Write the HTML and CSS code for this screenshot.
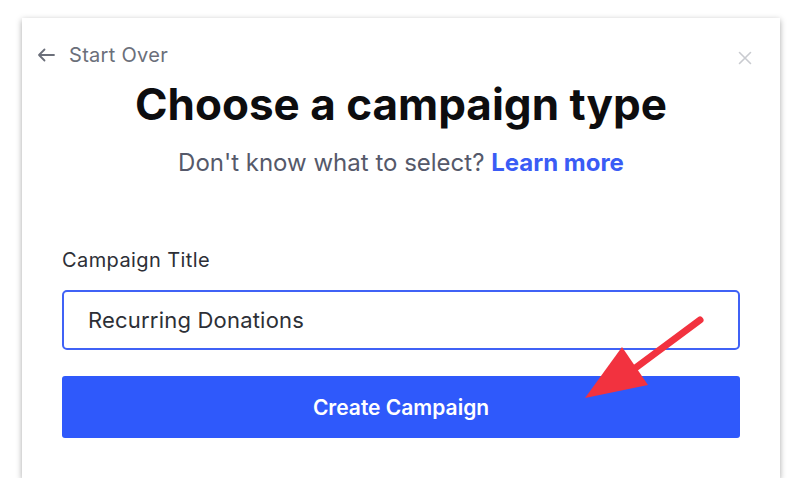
FILE: index.html
```html
<!DOCTYPE html>
<html lang="en">
<head>
    <meta charset="UTF-8">
    <meta name="viewport" content="width=device-width, initial-scale=1.0">
    <title>Choose a campaign type</title>
    <link rel="stylesheet" href="styles.css">
</head>
<body>
    <div class="modal">
        <div class="topbar">
            <a class="back" href="#">
                <svg width="18" height="14" viewBox="0 0 18 14"><path d="M17 7H2M7.5 1.5L2 7l5.5 5.5" fill="none" stroke="#6b6f7a" stroke-width="1.8" stroke-linecap="round" stroke-linejoin="round"/></svg>
                <span>Start Over</span>
            </a>
            <button class="close" type="button" aria-label="Close">
                <svg width="14" height="14" viewBox="0 0 14 14"><path d="M1.5 1.5l11 11M12.5 1.5l-11 11" stroke="#c9cbd0" stroke-width="1.6" stroke-linecap="round"/></svg>
            </button>
        </div>

        <h1>Choose a campaign type</h1>
        <p class="sub">Don't know what to select? <a href="#">Learn more</a></p>

        <form class="form">
            <label for="title">Campaign Title</label>
            <input type="text" id="title" value="Recurring Donations">
            <button type="button" class="create">Create Campaign</button>
        </form>

        <svg class="pointer" width="140" height="100" viewBox="0 0 140 100">
            <path d="M121 8L55 57" stroke="#f2323f" stroke-width="7" stroke-linecap="round"/>
            <polygon points="6,86 43,35 69,73" fill="#f2323f"/>
        </svg>
    </div>
</body>
</html>
```

FILE: styles.css
```css
body {
    margin: 0;
    padding: 18px 0 0 22px;
    background: #fff;
    font-family: Inter, "Noto Sans", sans-serif;
}
.modal {
    position: relative;
    width: 758px;
    height: 460px;
    box-sizing: border-box;
    background: #fff;
    box-shadow: 0 2px 6px rgba(0,0,0,0.35);
    padding: 25px 40px 0 40px;
}
.topbar {
    display: flex;
    justify-content: space-between;
    align-items: center;
    height: 24px;
    margin: 0 -12px 0 -25px;
}
.back {
    display: flex;
    align-items: center;
    gap: 14px;
    color: #6b6f7a;
    text-decoration: none;
    font-size: 20px;
    line-height: 24px;
    letter-spacing: 0.3px;
}
.close {
    background: none;
    border: none;
    padding: 0;
    margin-top: 6px;
    display: flex;
}
h1 {
    margin: 11px 0 0;
    text-align: center;
    font-size: 44px;
    line-height: 52px;
    font-weight: 700;
    color: #0d0d0f;
}
.sub {
    margin: 18px 0 0;
    text-align: center;
    font-size: 24px;
    line-height: 30px;
    color: #55596a;
}
.sub a {
    color: #3a5cf5;
    font-weight: 700;
    text-decoration: none;
}
.form {
    margin-top: 70px;
}
label {
    display: block;
    font-size: 20px;
    line-height: 24px;
    letter-spacing: 0.4px;
    color: #2d2f36;
    margin-bottom: 18px;
}
input {
    display: block;
    width: 100%;
    height: 60px;
    box-sizing: border-box;
    border: 2px solid #4062f6;
    border-radius: 5px;
    padding: 0 24px;
    font-family: inherit;
    font-size: 22px;
    letter-spacing: 0.2px;
    color: #2d2f36;
    outline: none;
}
.create {
    display: block;
    width: 100%;
    height: 62px;
    margin-top: 26px;
    border: none;
    border-radius: 3px;
    background: #2f59fb;
    color: #fff;
    font-family: inherit;
    font-size: 21px;
    font-weight: 600;
    cursor: pointer;
}
.pointer {
    position: absolute;
    left: 557px;
    top: 294px;
}
```
